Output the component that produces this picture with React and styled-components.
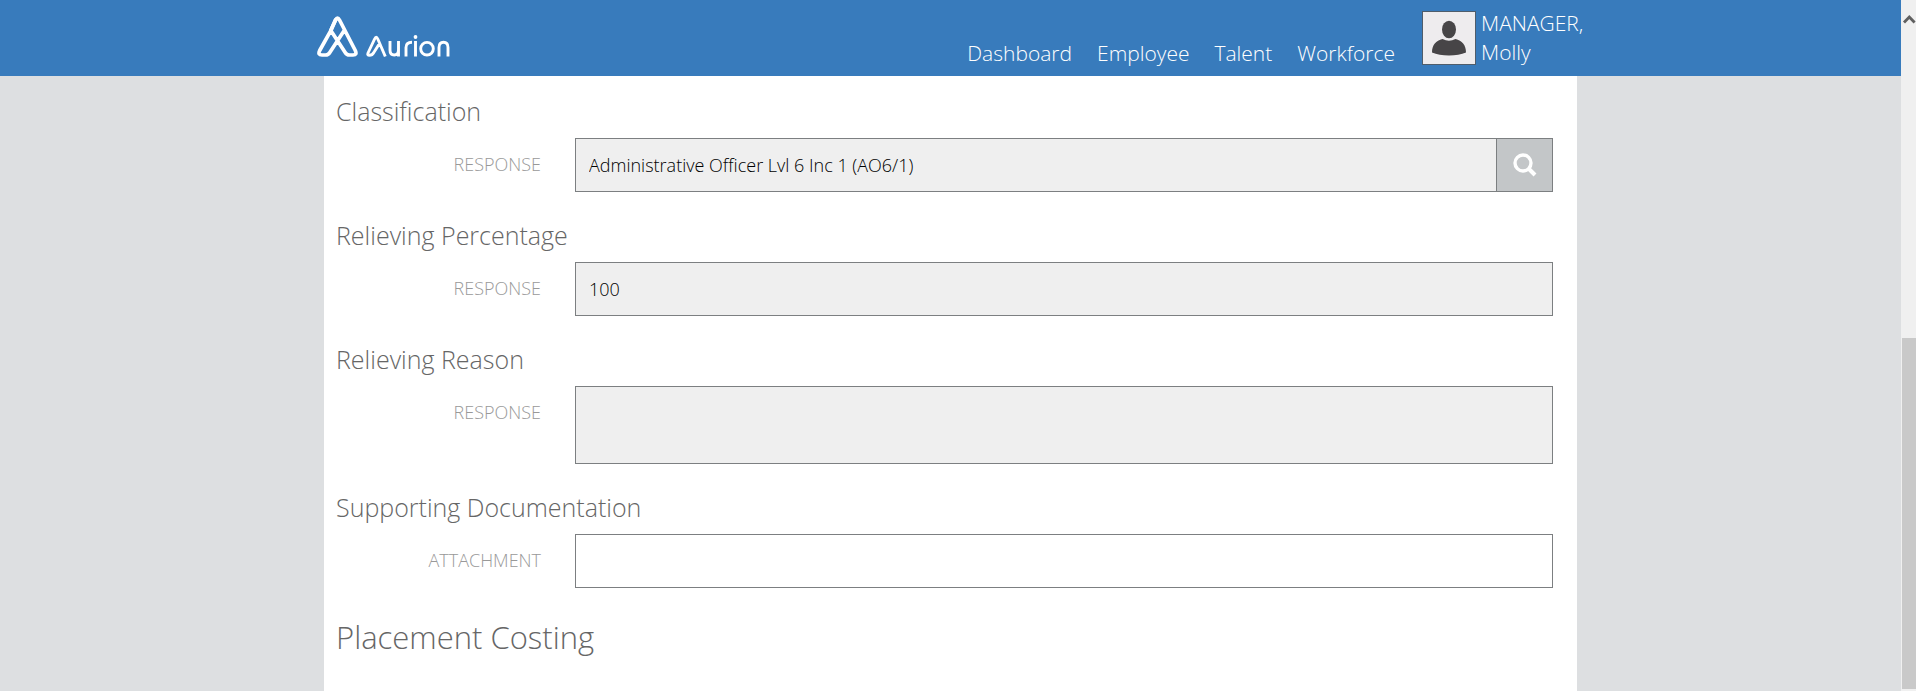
import React from "react";
import styled, { createGlobalStyle } from "styled-components";

const GlobalStyle = createGlobalStyle`
  *, *::before, *::after { box-sizing: border-box; }
  html, body, #root { height: 100%; }
  body {
    margin: 0;
    overflow: hidden;
    background: #dddfe1;
    color: #666;
    font-family: "Open Sans", "Noto Sans", sans-serif;
    font-weight: 300;
  }
`;

const Window = styled.div`
  display: flex;
  height: 100%;
`;

const Viewport = styled.div`
  flex: 1;
  min-width: 0;
  display: flex;
  flex-direction: column;
`;

const Header = styled.header`
  background: #387bbc;
  color: #fff;
`;

const HeaderInner = styled.div`
  display: flex;
  justify-content: space-between;
  width: 100%;
  max-width: 1267px;
  height: 76px;
  margin: 0 auto;
`;

const Brand = styled.a`
  display: flex;
  align-items: flex-start;
  padding-top: 15px;
  color: inherit;
`;

const HeaderRight = styled.div`
  display: flex;
`;

const Nav = styled.nav`
  display: flex;
  align-items: flex-end;
  gap: 25px;
  padding: 0 27px 9px 0;
`;

const NavLink = styled.a`
  color: inherit;
  font-size: 21px;
  line-height: 28px;
  text-decoration: none;
`;

const User = styled.a`
  display: flex;
  align-items: flex-start;
  gap: 5px;
  padding-top: 11px;
  color: inherit;
  font-size: 21px;
  line-height: 29px;
  text-decoration: none;
`;

const Avatar = styled.span`
  display: block;
  width: 54px;
  height: 54px;
  border: 1px solid #4f5d6b;
  background: #eeecee;
`;

const UserName = styled.span`
  width: 103px;
  margin-top: -2px;
`;

const Panel = styled.main`
  flex: 1;
  width: 100%;
  max-width: 1253px;
  margin: 0 auto;
  padding: 16px 24px 0 12px;
  background: #fff;
`;

const Field = styled.section`
  margin-bottom: 24px;
`;

const FieldTitle = styled.h3`
  margin: 0 0 8px;
  font-size: 25px;
  font-weight: 300;
  line-height: 38px;
`;

const FieldRow = styled.div`
  display: flex;
  align-items: flex-start;
`;

const Label = styled.label`
  width: 205px;
  margin-right: 34px;
  color: #999;
  font-size: 18px;
  line-height: 53px;
  text-align: right;
`;

const Control = styled.div`
  flex: 1;
  display: flex;
  border: 1px solid #7c7f81;
`;

const TextInput = styled.input`
  flex: 1;
  min-width: 0;
  height: 52px;
  padding: 0 13px;
  border: 0;
  background: ${(p) => (p.readOnly ? "#efefef" : "#fff")};
  color: #000;
  font: inherit;
  font-size: 18px;
`;

const TextArea = styled.textarea`
  flex: 1;
  height: 76px;
  padding: 12px 13px;
  border: 0;
  background: #efefef;
  color: #000;
  font: inherit;
  font-size: 18px;
  resize: none;
`;

const SearchButton = styled.button`
  display: flex;
  align-items: center;
  justify-content: center;
  width: 56px;
  padding: 0;
  border: 0;
  border-left: 1px solid #7c7f81;
  background: #c3c6c8;
`;

const SectionTitle = styled.h2`
  margin: 0;
  font-size: 31px;
  font-weight: 300;
  line-height: 50px;
`;

const ScrollBar = styled.div`
  display: flex;
  flex-direction: column;
  width: 15px;
  padding: 14px 0 2px 1px;
  background: #f0f0f0;
`;

const ScrollThumb = styled.div`
  flex: 1;
  margin-top: 314px;
  background: #c9c9c9;
`;

function Logo() {
  return (
    <svg width="134" height="44" viewBox="0 0 134 44" fill="none" stroke="#fff" role="img" aria-label="Aurion">
      <g strokeWidth="3.7" strokeLinejoin="round" strokeLinecap="round">
        <path d="M13.800 15.600L18.500 5Q20.500 1 22.500 5L38.300 35.500Q40.300 40 36 40H32.500Q29.700 40 28.200 37.500L13.800 15.600L2.700 35.500Q0.500 40 5 40H8.500Q11.300 40 12.800 37.500L27.200 15.600" />
        <path d="M18.500 5L13.800 15.600" />
      </g>
      <g strokeWidth="2.900" strokeLinecap="butt" strokeLinejoin="round">
        <path d="M68.300 41.500L60.800 24Q59.200 20.500 57.600 24L51 38Q50 40.300 52.500 40.300Q55.300 40.300 56.800 37.500L62.500 28.500" />
        <path d="M73 26V35Q73 40 77.200 40Q81.500 40 81.500 35V26M81.500 33V41.500" />
        <path d="M89 41.500V32.500Q89 27.300 95 27.300" />
        <path d="M98.500 26V41.500" />
        <circle cx="110" cy="33.700" r="6.300" />
        <path d="M122 41.500V32.500Q122 27.300 126.500 27.300Q131 27.300 131 32.500V41.500" />
      </g>
      <circle cx="98.500" cy="22" r="1.900" fill="#fff" stroke="none" />
    </svg>
  );
}

function Person() {
  return (
    <svg width="52" height="52" viewBox="0 0 52 52" fill="#474547" aria-hidden="true">
      <ellipse cx="26" cy="17.500" rx="7" ry="8.700" />
      <path d="M19.500 27Q26 30.500 32.500 27C39 28.500 43 33 43 40.500Q36 43.500 26 43.500Q16 43.500 9 40.500C9 33 13 28.500 19.500 27Z" />
    </svg>
  );
}

function Magnifier() {
  return (
    <svg width="24" height="24" viewBox="0 0 24 24" fill="none" stroke="#fff" aria-hidden="true">
      <circle cx="10" cy="10" r="8" strokeWidth="3.400" />
      <path d="M15.500 15.500L22 22" strokeWidth="4" />
    </svg>
  );
}

function ScrollArrow() {
  return (
    <svg width="14" height="10" viewBox="0 0 14 10" fill="none" stroke="#606060" strokeWidth="2.800" aria-hidden="true">
      <path d="M2 8.500L7.300 3L12.600 8.500" />
    </svg>
  );
}

function FormField({ id, title, label, children }) {
  return (
    <Field>
      <FieldTitle>{title}</FieldTitle>
      <FieldRow>
        <Label htmlFor={id}>{label}</Label>
        <Control>{children}</Control>
      </FieldRow>
    </Field>
  );
}

export default function App() {
  return (
    <>
      <GlobalStyle />
      <Window>
        <Viewport>
          <Header>
            <HeaderInner>
              <Brand href="#home"><Logo /></Brand>
              <HeaderRight>
                <Nav>
                  {["Dashboard", "Employee", "Talent", "Workforce"].map((name) => (
                    <NavLink key={name} href={`#${name.toLowerCase()}`}>{name}</NavLink>
                  ))}
                </Nav>
                <User href="#profile">
                  <Avatar><Person /></Avatar>
                  <UserName>MANAGER, Molly</UserName>
                </User>
              </HeaderRight>
            </HeaderInner>
          </Header>
          <Panel>
            <FormField id="classification" title="Classification" label="RESPONSE">
              <TextInput id="classification" readOnly defaultValue="Administrative Officer Lvl 6 Inc 1 (AO6/1)" />
              <SearchButton type="button" aria-label="Search"><Magnifier /></SearchButton>
            </FormField>
            <FormField id="percentage" title="Relieving Percentage" label="RESPONSE">
              <TextInput id="percentage" readOnly defaultValue="100" />
            </FormField>
            <FormField id="reason" title="Relieving Reason" label="RESPONSE">
              <TextArea id="reason" readOnly />
            </FormField>
            <FormField id="attachment" title="Supporting Documentation" label="ATTACHMENT">
              <TextInput id="attachment" />
            </FormField>
            <SectionTitle>Placement Costing</SectionTitle>
          </Panel>
        </Viewport>
        <ScrollBar>
          <ScrollArrow />
          <ScrollThumb />
        </ScrollBar>
      </Window>
    </>
  );
}
